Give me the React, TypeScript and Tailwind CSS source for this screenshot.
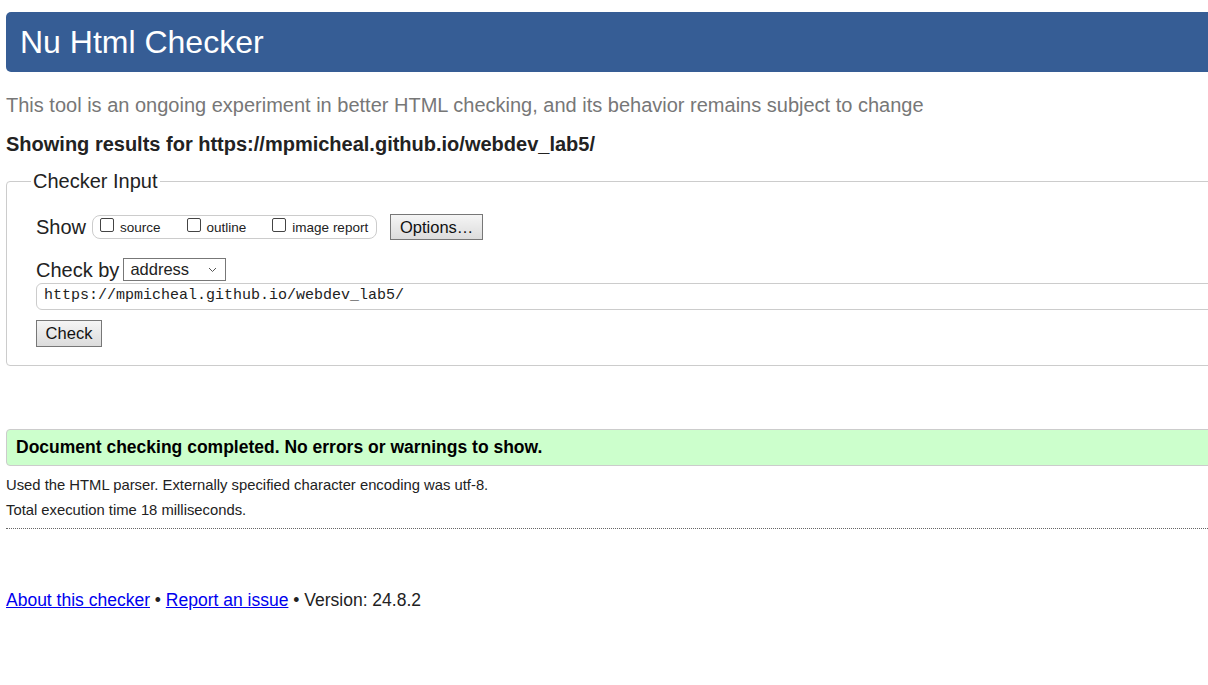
import React from 'react';

// Nu Html Checker results page
const font = { fontFamily: '"Liberation Sans", Arial, sans-serif' };

function Box({ label }: { label: string }) {
  return (
    <label className="flex items-center gap-[6px] mr-[26px] last:mr-0">
      <span className="w-[14px] h-[14px] border border-[#444] bg-white rounded-[2px] -translate-y-[2px]" />
      <span className="text-[13.5px] text-[#222] leading-none translate-y-[1px]">{label}</span>
    </label>
  );
}

export default function App() {
  return (
    <div className="w-[1208px] h-[685px] overflow-hidden bg-white" style={font}>
      <div className="w-[1260px] pl-[6px] pt-[12px] text-[#222]">
        {/* header */}
        <div className="h-[60px] bg-[#365d95] rounded-[5px] flex items-center pl-[14px]">
          <h1 className="text-[32px] text-white leading-none">Nu Html Checker</h1>
        </div>

        <p className="mt-[22px] text-[20px] text-[#777] leading-[22px]">
          This tool is an ongoing experiment in better HTML checking, and its behavior remains subject to change
        </p>
        <p className="mt-[17px] text-[20px] font-bold leading-[22px]">
          Showing results for https://mpmicheal.github.io/webdev_lab5/
        </p>

        {/* input form */}
        <fieldset className="mt-[15px] border border-[#ccc] rounded-[4px] pl-[29px] pb-[18px] pt-0">
          <legend className="text-[20px] px-[2px] -ml-[5px] leading-[22px]">Checker Input</legend>
          <div className="flex items-center h-[26px] mt-[22px]">
            <span className="text-[20px] mr-[6px] leading-none">Show</span>
            <div className="h-[24px] border border-[#ccc] rounded-[8px] flex items-center pl-[7px] pr-[8px]">
              <Box label="source" />
              <Box label="outline" />
              <Box label="image report" />
            </div>
            <button className="ml-[13px] h-[26px] w-[93px] border border-[#777] bg-gradient-to-b from-[#f5f5f5] to-[#dcdcdc] text-[16.5px] text-[#111]">
              Options…
            </button>
          </div>
          <div className="flex items-center h-[23px] mt-[18px]">
            <span className="text-[20px] mr-[4px] leading-none">Check by</span>
            <div className="w-[103px] h-[23px] border border-[#777] flex items-center justify-between pl-[6px] pr-[8px]">
              <span className="text-[16.5px] leading-none">address</span>
              <svg width="9" height="6" viewBox="0 0 9 6" fill="none" stroke="#555" strokeWidth="1">
                <path d="M1 1l3.5 3.5L8 1" />
              </svg>
            </div>
          </div>
          <div className="mt-[2px] h-[27px] border border-[#ccc] rounded-[6px] flex items-center pl-[7px]">
            <span className="text-[15px]" style={{ fontFamily: '"Liberation Mono", monospace' }}>
              https://mpmicheal.github.io/webdev_lab5/
            </span>
          </div>
          <button className="mt-[10px] h-[27px] w-[66px] border border-[#777] bg-gradient-to-b from-[#f5f5f5] to-[#dcdcdc] text-[16.5px] text-[#111] block">
            Check
          </button>
        </fieldset>

        {/* result */}
        <div className="mt-[63px] h-[37px] bg-[#ccffcc] border border-[#ccc] rounded-[4px] flex items-center pl-[9px]">
          <span className="text-[17.5px] font-bold text-black">Document checking completed. No errors or warnings to show.</span>
        </div>
        <p className="mt-[10px] text-[14.8px] leading-[18px]">
          Used the HTML parser. Externally specified character encoding was utf-8.
        </p>
        <p className="mt-[7px] text-[14.8px] leading-[18px]">Total execution time 18 milliseconds.</p>
        <hr className="mt-[9px] border-0 border-t border-dotted border-[#666]" />

        {/* footer */}
        <p className="mt-[61px] text-[17.5px] leading-[20px]">
          <a href="#" className="text-[#0000ee] underline">About this checker</a>
          {' • '}
          <a href="#" className="text-[#0000ee] underline">Report an issue</a>
          {' • Version: 24.8.2'}
        </p>
      </div>
    </div>
  );
}
